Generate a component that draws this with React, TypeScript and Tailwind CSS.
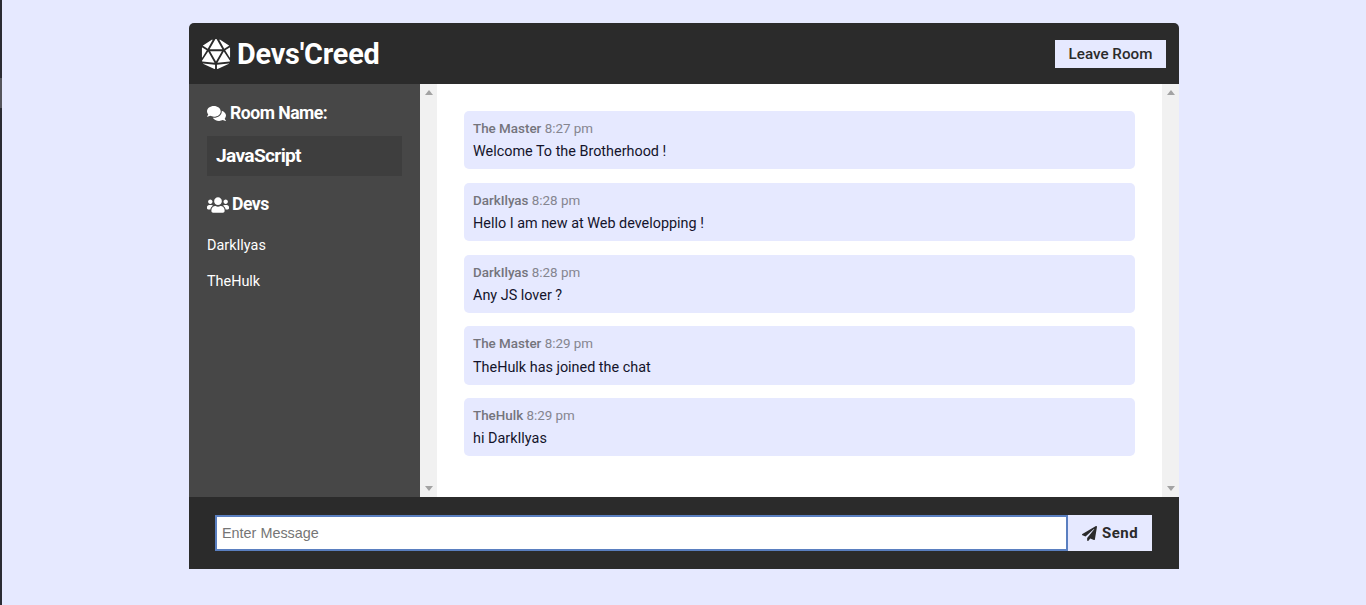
import { FaComments, FaUsers, FaPaperPlane, FaDiceD20 } from 'react-icons/fa';

const messages = [
    { author: 'The Master', time: '8:27 pm', text: 'Welcome To the Brotherhood !' },
    { author: 'DarkIlyas', time: '8:28 pm', text: 'Hello I am new at Web developping !' },
    { author: 'DarkIlyas', time: '8:28 pm', text: 'Any JS lover ?' },
    { author: 'The Master', time: '8:29 pm', text: 'TheHulk has joined the chat' },
    { author: 'TheHulk', time: '8:29 pm', text: 'hi DarkIlyas' },
];

function Scrollbar() {
    return (
        <div className="w-[17px] shrink-0 bg-[#f1f1f1] flex flex-col items-center justify-between py-[6px]">
            <div className="w-0 h-0 border-x-[4px] border-x-transparent border-b-[5px] border-b-[#a3a3a3]" />
            <div className="w-0 h-0 border-x-[4px] border-x-transparent border-t-[5px] border-t-[#a3a3a3]" />
        </div>
    );
}

export default function App() {
    return (
        <div className="h-[605px] bg-[#e6e9ff] font-['Roboto',sans-serif] flex overflow-hidden">
            {/* strip of the window behind */}
            <div className="w-[2px] shrink-0 flex flex-col bg-[#2b2b33]">
                <div className="h-[78px]" />
                <div className="h-[30px] bg-[#55555c]" />
            </div>

            <div className="ml-[187px] mt-[23px] w-[990px] h-[546px] flex flex-col">
                <header className="h-[61px] shrink-0 bg-[#2b2b2b] rounded-t-[5px] flex items-center justify-between pl-[12px] pr-[13px]">
                    <h1 className="flex items-center gap-[6px] text-white text-[28.8px] font-bold tracking-[-0.2px] pt-[2px]">
                        <FaDiceD20 className="w-[30px] h-[30px] -mt-[2px]" />
                        Devs'Creed
                    </h1>
                    <button className="w-[111px] h-[28px] pt-[1px] bg-[#e6e9ff] text-[#2b2b2b] text-[15.2px] font-medium flex items-center justify-center">
                        Leave Room
                    </button>
                </header>

                <main className="h-[413px] flex">
                    <aside className="w-[231px] shrink-0 bg-[#474747] text-white px-[18px] pt-[19px]">
                        <h3 className="flex items-center gap-[4px] h-[21px] text-[17.6px] font-bold tracking-[-0.5px]">
                            <FaComments className="w-[19px] h-[19px] -mt-[1px]" />
                            Room Name:
                        </h3>
                        <div className="mt-[12px] h-[40px] w-[195px] bg-[#3e3e3e] px-[9px] flex items-center text-[19.2px] font-bold tracking-[-0.7px]">
                            JavaScript
                        </div>
                        <h3 className="mt-[18px] flex items-center gap-[3px] h-[21px] text-[17.6px] font-bold tracking-[-0.5px]">
                            <FaUsers className="w-[22px] h-[18px]" />
                            Devs
                        </h3>
                        <ul className="mt-[22px] flex flex-col gap-[18px] text-[14.4px] font-normal leading-[18px]">
                            <li>DarkIlyas</li>
                            <li>TheHulk</li>
                        </ul>
                    </aside>
                    <Scrollbar />

                    <section className="flex-1 bg-white pt-[27.1px] px-[27px] flex flex-col gap-[13.45px]">
                        {messages.map((m, i) => (
                            <div key={i} className="h-[58.3px] bg-[#e6e9ff] rounded-[5px] px-[9px] pt-[8px]">
                                <p className="text-[13.4px] leading-[20px] text-[#85858f]">
                                    <span className="font-medium text-[#74747c]">{m.author}</span> {m.time}
                                </p>
                                <p className="mt-[4.3px] text-[14.4px] leading-[18px] text-[#14142b]">{m.text}</p>
                            </div>
                        ))}
                    </section>
                    <Scrollbar />
                </main>

                <footer className="h-[72px] shrink-0 bg-[#2b2b2b] pl-[26px] pr-[27px] flex items-center">
                    <input
                        placeholder="Enter Message"
                        className="flex-1 h-[36px] bg-white border-2 border-[#5a7fc0] px-[5px] text-[14.4px] font-['Liberation_Sans',sans-serif] placeholder:text-[#757575] outline-none"
                    />
                    <button className="w-[84px] h-[36px] bg-[#e6e9ff] text-[#2b2b2b] text-[15px] font-bold tracking-[0.5px] flex items-center justify-center gap-[5px]">
                        <FaPaperPlane className="w-[15px] h-[15px]" />
                        Send
                    </button>
                </footer>
            </div>
        </div>
    );
}
